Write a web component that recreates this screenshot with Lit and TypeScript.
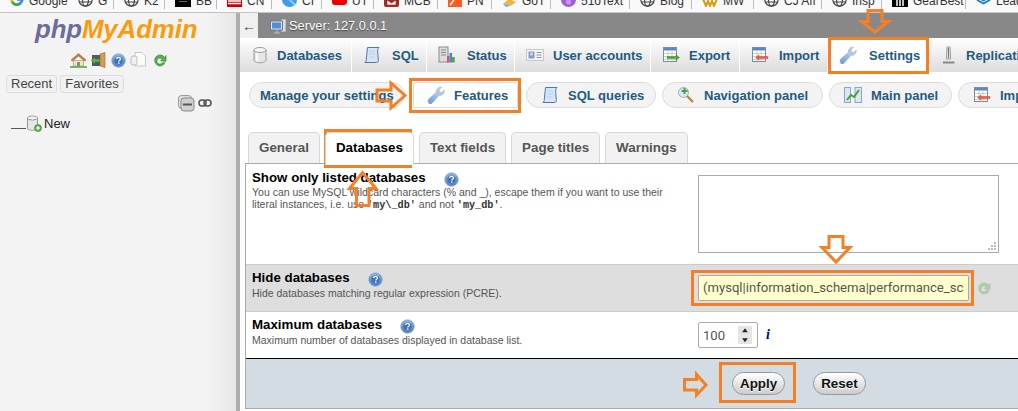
import { LitElement, html, css, svg } from "lit";
import { customElement } from "lit/decorators.js";

const help = () => html`<svg class="help" width="15" height="15" viewBox="0 0 16 16">
  <defs><radialGradient id="hg" cx="50%" cy="35%" r="65%"><stop offset="0" stop-color="#b9d2ee"/><stop offset="0.6" stop-color="#6f9bd0"/><stop offset="1" stop-color="#4c78b0"/></radialGradient></defs>
  <circle cx="8" cy="8" r="7.3" fill="url(#hg)" stroke="#9db8d8" stroke-width=".8"/>
  <circle cx="8" cy="8" r="4.6" fill="#3f74b8"/>
  <path d="M5.900 6.400c.2-1.200 1.100-1.700 2.100-1.700 1.200 0 2.100.7 2.100 1.700 0 1.400-1.700 1.400-1.700 2.600" fill="none" stroke="#fff" stroke-width="1.300"/>
  <rect x="7.500" y="10" width="1.500" height="1.500" fill="#fff"/></svg>`;

const wrench = () => html`<svg width="18" height="18" viewBox="0 0 18 18">
  <defs><linearGradient id="wg" x1="0" y1="1" x2="1" y2="0"><stop offset="0" stop-color="#6a96d0"/><stop offset="0.55" stop-color="#a8c4e8"/><stop offset="1" stop-color="#cfd3d9"/></linearGradient></defs>
  <path d="M1.200 13.600 9.400 6.300C9 3.700 11 1 14.600 1.100l-2.500 2.700.5 2.200 2.300.6 2.300-2.500c.4 3.500-2.300 5.800-5.100 5.200l-7 7.900c-1.200 1.100-2.400 1.100-3.300.2-.8-.9-.7-2.700-.6-3.800z" fill="url(#wg)" stroke="#8ba8cf" stroke-width=".5"/></svg>`;

const scroll = () => html`<svg width="18" height="18" viewBox="0 0 18 18">
  <path d="M4.500 1.500h11.500c-1.200 1.200-1.500 3-1.300 5l.6 8c.1 1.200-.6 2-1.800 2H1.800c1.200-.6 1.500-1.600 1.500-3z" fill="#d6e4f5" stroke="#4d79ad" stroke-width="1"/>
  <path d="M6 5h6M6 8h6M6 11h5" stroke="#b5cbe5" stroke-width=".8"/></svg>`;

const table = (arrow: string) => html`<svg width="18" height="18" viewBox="0 0 18 18">
  <rect x="1.500" y="1.500" width="13" height="14" fill="#fff" stroke="#7d8da8"/>
  <rect x="2" y="2" width="12" height="2.500" fill="#5f86c0"/>
  <path d="M2 7.500h12M2 10.500h12M2 13.500h12M6 5v10M10 5v10" stroke="#b3d0a0" stroke-width=".8"/>
  ${arrow === "out"
    ? svg`<path d="M5 10.500h9v-1.700l3.500 2.700-3.500 2.700v-1.700H5z" fill="#4fa63a" stroke="#2d7a22" stroke-width=".4"/>`
    : svg`<path d="M17 10.500H8V8.800L4.500 11.500 8 14.200v-1.700h9z" fill="#ef5a5a" stroke="#d33" stroke-width=".4"/>`}</svg>`;

const dbIcon = () => html`<svg width="16" height="18" viewBox="0 0 16 18">
  <path d="M2 4v10c0 1.600 2.700 2.800 6 2.800s6-1.200 6-2.800V4z" fill="#e6e6e6" stroke="#9c9c9c"/>
  <ellipse cx="8" cy="4" rx="6" ry="2.500" fill="#f6f6f6" stroke="#9c9c9c"/>
  <path d="M5 7v8" stroke="#fff" stroke-width="2"/></svg>`;

const statusIcon = () => html`<svg width="18" height="18" viewBox="0 0 18 18">
  <rect x="1" y="1" width="9" height="15" fill="#dcdcdc" stroke="#8b8b8b"/>
  <path d="M3 4h5M3 6.500h5M3 9h5" stroke="#8b8b8b"/>
  <rect x="9" y="10" width="2.500" height="6.500" fill="#d9534f"/>
  <rect x="11.500" y="7" width="2.500" height="9.500" fill="#4a86d0"/>
  <rect x="14" y="11" width="2.800" height="5.500" fill="#58a83f"/></svg>`;

const usersIcon = () => html`<svg width="18" height="18" viewBox="0 0 18 18">
  <rect x="0.500" y="3.500" width="17" height="11" fill="#f4f4f4" stroke="#c8c8c8"/>
  <rect x="2.500" y="5.500" width="6" height="7" fill="#7ba0d4"/>
  <circle cx="5.500" cy="8" r="1.700" fill="#f0c9a0"/>
  <path d="M10.500 6.500h5M10.500 9h5M10.500 11.500h5" stroke="#8a97a8"/></svg>`;

const replIcon = () => html`<svg width="18" height="18" viewBox="0 0 18 18">
  <path d="M7 1h3l.6 12H6.400z" fill="#e4e4e4" stroke="#9c9c9c"/>
  <path d="M8.500 2v10" stroke="#777"/>
  <path d="M3 16.500h11.500" stroke="#888" stroke-width="2"/></svg>`;

const zoomPlus = () => html`<svg width="18" height="18" viewBox="0 0 18 18">
  <circle cx="6.500" cy="6.500" r="5" fill="#d8e6f5" stroke="#9cb3cc"/>
  <path d="M10 10l6 6" stroke="#b8803c" stroke-width="2.200"/>
  <path d="M7.500 2v6M4.500 5h6" stroke="#4aa53a" stroke-width="2"/></svg>`;

const panelIcon = () => html`<svg width="18" height="18" viewBox="0 0 18 18">
  <rect x="0.500" y="1.500" width="6" height="15" fill="#d8e6f5" stroke="#8aa6c8"/>
  <rect x="11" y="1.500" width="6.500" height="15" fill="#d8e6f5" stroke="#8aa6c8"/>
  <path d="M3 14l4-5 3 2 5-7" fill="none" stroke="#4f9a35" stroke-width="2"/></svg>`;

const reload = (cls = "") => html`<svg class=${cls} width="15" height="17" viewBox="0 0 15 17">
  <path d="M12.800 5.500A5.500 5.500 0 1 0 13 11l-2.500-.6a3 3 0 1 1-.3-3.200L8.500 8.700 14 9.400V3.500z" fill="#58b04a" stroke="#2f8230" stroke-width=".6"/></svg>`;

const globe = () => html`<svg width="15" height="15" viewBox="0 0 15 15">
  <g fill="none" stroke="#444" stroke-width="1.200"><circle cx="7.500" cy="7.500" r="6.700"/><ellipse cx="7.500" cy="7.500" rx="3" ry="6.700"/><path d="M1 5h13M1 10h13"/></g></svg>`;

const fav: Record<string, () => unknown> = {
  google: () => html`<svg width="14" height="15" viewBox="0 0 14 15"><path d="M1 3.500a6.500 6.500 0 0 0 0 7l2.200-1.800a3.800 3.800 0 0 1 0-3.400z" fill="#fbbc05"/><path d="M1 10.500a6.500 6.500 0 0 0 11 1l-2.200-1.700a3.800 3.800 0 0 1-6.600-1.100z" fill="#34a853"/><path d="M12 11.500A6.500 6.500 0 0 0 13.500 6H7v2.700h3.700a3.200 3.200 0 0 1-.9 1.100z" fill="#4285f4"/></svg>`,
  globe,
  bb: () => html`<svg width="16" height="15" viewBox="0 0 16 15"><rect width="16" height="15" fill="#000"/><rect x="4" y="9" width="8" height="1" fill="#666"/></svg>`,
  cnn: () => html`<svg width="15" height="15" viewBox="0 0 15 15"><rect width="15" height="15" fill="#cc0000"/><path d="M1 9h13M1 11.500h13" stroke="#fff" stroke-width="1.300"/></svg>`,
  ci: () => html`<svg width="15" height="15" viewBox="0 0 15 15"><circle cx="7.500" cy="7.500" r="7.500" fill="#3d9be9"/><path d="M7 7l6 6" stroke="#8fcaf5" stroke-width="2"/></svg>`,
  yt: () => html`<svg width="15" height="15" viewBox="0 0 15 15"><rect width="15" height="13" y="0" rx="3" fill="#ee0000"/></svg>`,
  mcb: () => html`<svg width="15" height="15" viewBox="0 0 15 15"><rect width="15" height="15" rx="2" fill="#a32a2a"/><path d="M3 8h9v5H3zM3 8l4.500 3L12 8" fill="#fff" stroke="#a32a2a" stroke-width=".7"/></svg>`,
  pn: () => html`<svg width="14" height="15" viewBox="0 0 14 15"><rect width="14" height="15" fill="#ff5a1f"/><path d="M2 13l4-5" stroke="#fff" stroke-width="1.500"/></svg>`,
  got: () => html`<svg width="15" height="15" viewBox="0 0 15 15"><path d="M1 12l6-5 7 3-4 3z" fill="#f3b33d"/><path d="M1 12l3 3 6-2" fill="#7aa7cf"/></svg>`,
  text: () => html`<svg width="15" height="15" viewBox="0 0 15 15"><circle cx="7.500" cy="7.500" r="7.500" fill="#a05fd8"/><circle cx="7.500" cy="10" r="2.500" fill="#c599ea"/></svg>`,
  mw: () => html`<svg width="16" height="15" viewBox="0 0 16 15"><path d="M1 7l3 7 2-5 2 5 2-5 2 5 3-7" fill="none" stroke="#d89a12" stroke-width="2"/></svg>`,
  gear: () => html`<svg width="16" height="15" viewBox="0 0 16 15"><rect width="16" height="15" fill="#000"/><path d="M5 7v7M8 7v7M11 7v7" stroke="#fff" stroke-width="1.500"/></svg>`,
  lead: () => html`<svg width="15" height="15" viewBox="0 0 15 15"><path d="M1 8l6.500 3.500L14 8M1 5l6.500 3.500L14 5" fill="none" stroke="#1e78d8" stroke-width="1.800"/></svg>`,
};

const bookmarks = [
  { w: 68, i: "google", t: "Google", sep: false },
  { w: 46, i: "globe", t: "G", sep: true },
  { w: 51, i: "globe", t: "K2", sep: true },
  { w: 52, i: "bb", t: "BB", sep: true },
  { w: 55, i: "cnn", t: "CN", sep: true },
  { w: 50, i: "ci", t: "CI", sep: true },
  { w: 52, i: "yt", t: "UT", sep: true },
  { w: 64, i: "mcb", t: "MCB", sep: true },
  { w: 54, i: "pn", t: "PN", sep: true },
  { w: 59, i: "got", t: "GoT", sep: true },
  { w: 79, i: "text", t: "51oText", sep: true },
  { w: 62, i: "globe", t: "Blog", sep: true },
  { w: 62, i: "mw", t: "MW", sep: true },
  { w: 68, i: "globe", t: "CJ Aff", sep: true },
  { w: 60, i: "globe", t: "Insp", sep: true },
  { w: 84, i: "gear", t: "GearBest", sep: true },
  { w: 70, i: "lead", t: "Leads", sep: false },
];

const tabs = [
  { t: "Databases", w: 112, g: 8, ic: dbIcon },
  { t: "SQL", w: 75, g: 11, ic: scroll },
  { t: "Status", w: 88, g: 11, ic: statusIcon },
  { t: "User accounts", w: 136, g: 9, ic: usersIcon },
  { t: "Export", w: 89, g: 9, ic: () => table("out") },
  { t: "Import", w: 88, g: 10, ic: () => table("in") },
  { t: "Settings", w: 101, g: 12, ic: wrench, active: true },
  { t: "Replication", w: 120, g: 8, ic: replIcon },
];

const pills = [
  { t: "Manage your settings", w: 156 },
  { t: "Features", w: 105, ic: wrench, active: true },
  { t: "SQL queries", w: 130, ic: scroll },
  { t: "Navigation panel", w: 161, ic: zoomPlus },
  { t: "Main panel", w: 123, ic: panelIcon },
  { t: "Import", w: 100, ic: () => table("in") },
];

const subTabs = ["General", "Databases", "Text fields", "Page titles", "Warnings"];

@customElement("app-root")
export class AppRoot extends LitElement {
  static styles = css`
    :host { display: block; position: relative; width: 1018px; height: 411px; overflow: hidden; background: #fff;
      font-family: "Liberation Sans", Arial, sans-serif; font-size: 13px; color: #333; }
    .bm { display: flex; height: 12px; overflow: hidden; background: #f9f9f9; border-bottom: 1px solid #c4c4c4; }
    .bm-item { flex: none; box-sizing: border-box; height: 12px; padding-left: 10px; display: flex; gap: 5px; white-space: nowrap;
      font-size: 12px; color: #333; position: relative; }
    .bm-item.sep::after { content: ""; position: absolute; right: 0; top: 0; bottom: 3px; width: 1px; background: #bbb; }
    .bm-item svg { margin-top: -8px; flex: none; }
    .bm-item span { margin-top: -6px; line-height: 14px; }
    .body { display: flex; height: 398px; }
    aside { flex: none; width: 236px; background: linear-gradient(90deg, #f3f3f3 0, #f3f3f3 88%, #e6e6e6 100%);
      border-right: 4px solid #adadad; box-sizing: content-box; }
    .logo { font-weight: bold; font-style: italic; font-size: 25.800px; line-height: 32px; height: 36px; margin: 0 0 0 35px; letter-spacing: -.1px; white-space: nowrap; color: #f89c0e; }
    .logo b { color: #6c6c9c; }
    .nav-ic { display: flex; align-items: center; height: 18px; margin: 2px 0 0 70px; }
    .nav-ic .nh { display: flex; margin: 0 4px 0 5px; }
    .nav-ic .nh .help { margin: 0; }
    .nav-ic .rl { margin-left: 6px; }
    .door { margin-left: 4px; }
    .rf { display: flex; gap: 3px; margin: 6px 0 0 6px; }
    .rf span { border: 1px solid #ddd; border-radius: 3px; padding: 0 4px; line-height: 16px; color: #444; background: #f1f1f1; }
    .tools { display: flex; align-items: center; gap: 3px; height: 18px; margin: 1px 0 0 178px; }
    .tree { display: flex; align-items: center; height: 18px; margin: 2px 0 0 11px; color: #222; }
    .tree i { display: block; width: 15px; height: 1px; background: #555; margin-top: 10px; }
    .tree span { margin: 0 0 0 2px; }

    main { flex: 1; min-width: 0; overflow: hidden; background: #fff; }
    .server { height: 25px; background: #888; display: flex; align-items: center; color: #fff; text-shadow: 0 1px 1px #444; font-size: 12.800px; }
    .back { width: 18px; height: 25px; background: #f0f0f0; color: #444; display: flex; align-items: center; justify-content: center; font-size: 14px; text-shadow: none; }
    .server svg { margin: 0 3px 0 12px; }
    .tabs { display: flex; height: 34px; background: linear-gradient(#ffffff, #dcdcdc); border-bottom: 0; }
    .tab { flex: none; box-sizing: border-box; display: flex; align-items: center; padding-left: 11px; border-right: 1px solid #fff; font-weight: bold; color: #235a81; white-space: nowrap; }
    .tab.active { background: #fff; border-right: none; }
    .ic { flex: none; display: flex; width: 18px; height: 18px; align-items: center; justify-content: center; }
    .pills { display: flex; gap: 6px; margin: 10px 0 0 9px; height: 26px; }
    .pill { flex: none; box-sizing: border-box; display: flex; align-items: center; padding-left: 14px; gap: 9px; background: #f3f3f3; border: 1px solid #dcdcdc; border-radius: 13px;
      font-weight: bold; color: #235a81; white-space: nowrap; }
    .pill.first { padding-left: 10px; }
    .pill.active { background: #fff; border-radius: 2px; margin: 0 2px; padding-left: 13px; }
    .stabs { display: flex; gap: 5px; margin: 24px 0 0 8px; height: 31px; position: relative; z-index: 1; }
    .stab { box-sizing: border-box; padding: 0 10px; line-height: 29px; height: 31px; background: #f2f2f2; border: 1px solid #d8d8d8; border-bottom: none; border-radius: 5px 5px 0 0; font-size: 13.400px; font-weight: bold; color: #555; white-space: nowrap; }
    .stab.active { background: #fff; color: #000; height: 33px; }
    .form { margin-left: 5px; border: 1px solid #aaa; border-right: none; width: 900px; }
    .row { display: flex; border-bottom: 1px solid #ccc; height: 46px; box-sizing: content-box; }
    .row.tall { height: 100px; }
    .row.shaded { background: #dedede; }
    .row.last { border-bottom: 1px solid #000; }
    .lbl { flex: none; width: 446px; padding: 5px 0 0 6px; box-sizing: content-box; }
    .tall .lbl { padding-top: 6px; }
    .title { display: flex; align-items: center; font-size: 13.300px; font-weight: bold; color: #000; line-height: 16px; height: 16px; white-space: nowrap; }
    .help { margin: 2px 0 0 18px; flex: none; }
    .desc { font-size: 10.500px; line-height: 12px; color: #555; margin-top: 1px; white-space: nowrap; }
    .tall .desc { margin-top: 0; }
    .desc code { font-family: "Liberation Mono", monospace; font-weight: bold; font-size: 10.200px; color: #333; }
    .ctl { display: flex; align-items: center; flex: 1; }
    .ta { box-sizing: border-box; width: 301px; height: 78px; border: 1px solid #aaa; position: relative; background: #fff; }
    .grip { position: absolute; right: 1px; bottom: 1px; }
    .txt { box-sizing: border-box; width: 271px; height: 26px; border: 1px solid #aaa; border-radius: 2px; background: #ffffcc; padding-left: 4px; color: #555; font-family: Roboto, sans-serif; font-size: 13.100px; line-height: 24px; overflow: hidden; white-space: nowrap; }
    .txt div { width: 261px; overflow: hidden; }
    .rel { margin-left: 7px; opacity: .35; }
    .num { box-sizing: border-box; width: 60px; height: 26px; border: 1px solid #aaa; border-radius: 2px; display: flex; align-items: center; justify-content: space-between; padding: 0 5px 0 4px; color: #555; font-family: Roboto, sans-serif; font-size: 13.100px; }
    .spin { display: flex; flex-direction: column; width: 14px; height: 18px; background: #e8e8e8; gap: 1px; }
    .spin svg { flex: none; }
    .info { margin-left: 8px; font: italic bold 14px "Liberation Serif", serif; color: #00008b; }
    .foot { display: flex; align-items: center; gap: 28px; height: 49px; background: #d3dce3; padding-left: 486px; }
    .btn { box-sizing: border-box; height: 23px; padding: 0 7px; display: flex; align-items: center; border: 1px solid #999; border-radius: 12px; background: linear-gradient(#fff, #ccc); font-weight: bold; font-size: 13.400px; color: #111; text-shadow: 0 1px 0 #fff; }
    .overlay { position: absolute; left: 0; top: 0; pointer-events: none; }
  `;

  render() {
    return html`
      <div class="bm">
        ${bookmarks.map((b) => html`<div class="bm-item ${b.sep ? "sep" : ""}" style="width:${b.w}px">${fav[b.i]()}<span>${b.t}</span></div>`)}
      </div>
      <div class="body">
        <aside>
          <div class="logo"><b>php</b>MyAdmin</div>
          <div class="nav-ic">
            <svg width="17" height="16" viewBox="0 0 17 16">
              <path d="M1 8l7.500-6.500L16 8l-1.500 1L8.500 4 2.500 9z" fill="#c08040" stroke="#8a5a2a" stroke-width=".5"/>
              <path d="M3.500 8.500h10V14h-10z" fill="#f3e6c8" stroke="#a88a5a" stroke-width=".6"/>
              <path d="M7 10h3v4H7z" fill="#8a8a8a"/><path d="M0 15h17" stroke="#5aa840" stroke-width="1.600"/>
            </svg>
            <svg class="door" width="15" height="16" viewBox="0 0 15 16">
              <path d="M9 2l5-1.500v15L9 14z" fill="#d89a50" stroke="#a06a2a" stroke-width=".6"/>
              <rect x="1" y="3" width="8" height="11" fill="#556" />
              <path d="M0 8.500l4-3.500v2h5v3H4v2z" fill="#5ab040" stroke="#2f8230" stroke-width=".4"/>
            </svg>
            <span class="nh">${help()}</span>
            <svg width="16" height="16" viewBox="0 0 16 16">
              <path d="M5 .5h7l3.500 3.500V14H5z" fill="#fafafa" stroke="#c8c8c8"/>
              <rect x="1" y="4" width="6" height="9" rx="2" fill="#f0f0f0" stroke="#c0c0c0"/>
            </svg>
            ${reload("rl")}
          </div>
          <div class="rf"><span>Recent</span><span>Favorites</span></div>
          <div class="tools">
            <svg width="17" height="17" viewBox="0 0 17 17"><rect x="0.500" y="0.500" width="13" height="13" rx="3" fill="#ddd" stroke="#999"/><rect x="3" y="3" width="13" height="13" rx="3" fill="#d0d0d0" stroke="#888"/><rect x="5" y="8.500" width="9" height="2" fill="#555"/></svg>
            <svg width="14" height="8" viewBox="0 0 14 8"><g fill="none" stroke="#555" stroke-width="1.500"><rect x="1" y="1" width="7" height="6" rx="3"/><rect x="6" y="1" width="7" height="6" rx="3"/></g></svg>
          </div>
          <div class="tree"><i></i>
            <svg width="16" height="17" viewBox="0 0 16 17"><path d="M1.500 3v10c0 1.400 2.200 2.300 5 2.300s5-.9 5-2.300V3z" fill="#e6e6e6" stroke="#999"/><ellipse cx="6.500" cy="3" rx="5" ry="2" fill="#f6f6f6" stroke="#999"/><circle cx="12" cy="13" r="3.500" fill="#5ab040" stroke="#3b8a2c" stroke-width=".6"/><path d="M10 13h4M12 11v4" stroke="#fff" stroke-width="1.200"/></svg>
            <span>New</span></div>
        </aside>
        <main>
          <div class="server">
            <div class="back">←</div>
            <svg width="16" height="16" viewBox="0 0 16 16"><rect x="11" y="1" width="5" height="13" fill="#ddd" stroke="#777" stroke-width=".6"/><rect x="0.500" y="3" width="12" height="9" fill="#dfe6ef" stroke="#66788e"/><rect x="2" y="4.500" width="9" height="6" fill="#4f8fd6"/><path d="M4 15h6M7 12v3" stroke="#bbb" stroke-width="1.200"/></svg>
            <span>Server: 127.0.0.1</span>
          </div>
          <div class="tabs">
            ${tabs.map((t) => html`<div class="tab ${t.active ? "active" : ""}" style="width:${t.w}px"><span class="ic" style="margin-right:${t.g}px">${t.ic()}</span>${t.t}</div>`)}
          </div>
          <div class="pills">
            ${pills.map((p, i) => html`<div class="pill ${p.active ? "active" : ""} ${i === 0 ? "first" : ""}" style="width:${p.w}px">${p.ic ? html`<span class="ic">${p.ic()}</span>` : ""}${p.t}</div>`)}
          </div>
          <div class="stabs">
            ${subTabs.map((s, i) => html`<div class="stab ${i === 1 ? "active" : ""}">${s}</div>`)}
          </div>
          <div class="form">
            <div class="row tall">
              <div class="lbl">
                <div class="title">Show only listed databases${help()}</div>
                <div class="desc">You can use MySQL wildcard characters (% and _), escape them if you want to use their<br />literal instances, i.e. use <code>'my\\_db'</code> and not <code>'my_db'</code>.</div>
              </div>
              <div class="ctl"><div class="ta"><svg class="grip" width="10" height="10" viewBox="0 0 10 10"><path d="M7 1h2v2H7zM4 4h2v2H4zM7 4h2v2H7zM1 7h2v2H1zM4 7h2v2H4zM7 7h2v2H7z" fill="#bbb"/></svg></div></div>
            </div>
            <div class="row shaded">
              <div class="lbl">
                <div class="title">Hide databases${help()}</div>
                <div class="desc">Hide databases matching regular expression (PCRE).</div>
              </div>
              <div class="ctl"><div class="txt"><div>(mysql|information_schema|performance_schema|phpmyadmin|sys)</div></div>${reload("rel")}</div>
            </div>
            <div class="row last">
              <div class="lbl">
                <div class="title">Maximum databases${help()}</div>
                <div class="desc">Maximum number of databases displayed in database list.</div>
              </div>
              <div class="ctl"><div class="num">100<div class="spin">
                <svg width="14" height="8.500" viewBox="0 0 14 9"><rect width="14" height="9" fill="#e4e4e4"/><path d="M7 2.500l3 4H4z" fill="#222"/></svg>
                <svg width="14" height="8.500" viewBox="0 0 14 9"><rect width="14" height="9" fill="#e4e4e4"/><path d="M7 6.500l3-4H4z" fill="#222"/></svg>
              </div></div><span class="info">i</span></div>
            </div>
            <div class="foot"><div class="btn">Apply</div><div class="btn">Reset</div></div>
          </div>
        </main>
      </div>
      <svg class="overlay" width="1018" height="411" viewBox="0 0 1018 411">
        <g fill="none" stroke="#f57f25" stroke-width="3">
          <rect x="829.500" y="38.500" width="98" height="34"/>
          <rect x="410.500" y="79.500" width="109" height="32"/>
          <rect x="325.500" y="130.500" width="85" height="36"/>
          <rect x="692.500" y="271.500" width="280" height="33"/>
          <rect x="720.500" y="363.500" width="74" height="38"/>
          <path d="M868 10.500h14v11h6.500L875 32 861.500 21.500H868z"/>
          <path d="M377 90h14v-7l14 12.500-14 12.500v-7h-14z"/>
          <path d="M356.500 205.500v-17h-7l13-16 13.500 16h-7v17z"/>
          <path d="M829 236.500h14v11h7L836 262l-14-14.500h7z"/>
          <path d="M684.500 379.500h12v-5l9.500 10.500-9.500 10v-5h-12z"/>
        </g>
      </svg>
    `;
  }
}
